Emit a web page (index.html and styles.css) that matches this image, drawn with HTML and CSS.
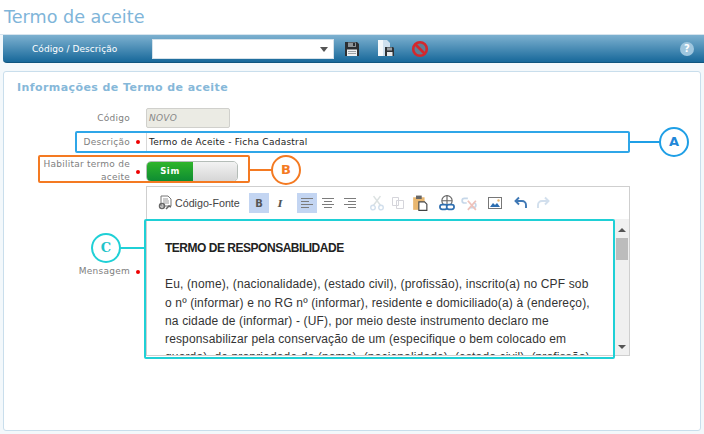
FILE: index.html
```html
<!DOCTYPE html>
<html lang="pt">
<head>
<meta charset="utf-8">
<title>Termo de aceite</title>
<link rel="stylesheet" href="styles.css">
</head>
<body>
<div class="page">
  <h1 class="title">Termo de aceite</h1>
  <div class="bar">
    <span class="bar-label">Código / Descrição</span>
    <div class="select"><span class="caret"></span></div>
    <div class="bar-icons">
      <svg class="ico" viewBox="0 0 16 16"><path d="M1 1h12l2 2v12H1z" fill="#2b2f33"/><rect x="4" y="1.500" width="8" height="4.500" fill="#8d9499"/><rect x="9" y="2" width="2" height="3" fill="#2b2f33"/><rect x="3" y="8.500" width="10" height="6.500" fill="#eef0f1"/><path d="M4 10.500h8M4 12.500h8" stroke="#9aa0a4"/></svg>
      <svg class="ico ico-saveas" viewBox="0 0 18 17"><path d="M1 0h9l3 3v13H1z" fill="#cfe0ee"/><path d="M1 0h5v16H1z" fill="#f4f8fb"/><path d="M8 7h8l1 1v8H8z" fill="#2e3338"/><rect x="10" y="7.500" width="5" height="3" fill="#9aa0a4"/><rect x="10" y="12" width="5.500" height="4" fill="#e8eaeb"/></svg>
      <svg class="ico ico-stop" viewBox="0 0 18 18"><circle cx="9" cy="9" r="6.800" fill="#5f7f96" stroke="#d3282d" stroke-width="2.600"/><path d="M4.500 4.500l9 9" stroke="#d3282d" stroke-width="2.600"/></svg>
    </div>
    <span class="help">?</span>
  </div>
  <section class="panel">
    <h2 class="panel-title">Informações de Termo de aceite</h2>
    <div class="form">
      <div class="row row-code">
        <label class="label">Código</label><span class="dot dot-off"></span>
        <div class="input input-off">NOVO</div>
      </div>
      <div class="row row-desc">
        <label class="label">Descrição</label><span class="dot"></span>
        <div class="input input-wide">Termo de Aceite - Ficha Cadastral</div>
      </div>
      <div class="row row-toggle">
        <label class="label label-two">Habilitar termo de aceite</label><span class="dot"></span>
        <div class="toggle"><span class="toggle-on">Sim</span><span class="toggle-off"></span></div>
      </div>
      <div class="row row-editor">
        <label class="label label-msg">Mensagem</label><span class="dot dot-msg"></span>
        <div class="editor">
          <div class="tools">
            <svg class="tool tool-src" viewBox="0 0 16 16"><path d="M3 1h7l3 3v7H3z" fill="#fff" stroke="#777"/><path d="M5 4h5M5 6h6M5 8h6" stroke="#999"/><circle cx="4" cy="11" r="2.500" fill="none" stroke="#666" stroke-width="1.500"/><path d="M8 14l3-3 2 1" fill="none" stroke="#666" stroke-width="1.500"/></svg>
            <span class="tool-text">Código-Fonte</span>
            <span class="tool tool-btn active"><b class="glyph">B</b></span>
            <span class="tool tool-btn gap-1"><i class="glyph glyph-i">I</i></span>
            <span class="tool tool-btn active gap-7"><svg viewBox="0 0 14 12" class="lines"><path d="M1 1.500h12M1 4.500h8M1 7.500h12M1 10.500h8"/></svg></span>
            <span class="tool tool-btn gap-1"><svg viewBox="0 0 14 12" class="lines"><path d="M1 1.500h12M3 4.500h8M1 7.500h12M3 10.500h8"/></svg></span>
            <span class="tool tool-btn gap-2"><svg viewBox="0 0 14 12" class="lines"><path d="M1 1.500h12M5 4.500h8M1 7.500h12M5 10.500h8"/></svg></span>
            <span class="tool tool-btn gap-7"><svg viewBox="0 0 14 14" class="faint big"><path d="M4 1l6 8M10 1L4 9" stroke="#9aa" fill="none" stroke-width="1.300"/><circle cx="3.500" cy="11" r="2" fill="none" stroke="#7fa6cc" stroke-width="1.200"/><circle cx="10.500" cy="11" r="2" fill="none" stroke="#7fa6cc" stroke-width="1.200"/></svg></span>
            <span class="tool tool-btn gap-1"><svg viewBox="0 0 14 14" class="faint"><path d="M1.500 1.500h6v8h-6zM5.500 4.500h7v8h-7z" fill="#fff" stroke="#889"/></svg></span>
            <span class="tool tool-btn gap-2"><svg viewBox="0 0 14 14" class="big"><path d="M1 2h10v11H1z" fill="#e9b770"/><rect x="3.500" y="0.500" width="5" height="3" fill="#666"/><path d="M6 6h5l2 2v5.500H6z" fill="#fff" stroke="#444"/></svg></span>
            <span class="tool tool-btn gap-7"><svg viewBox="0 0 14 14" class="big"><circle cx="7" cy="5" r="4.500" fill="none" stroke="#666"/><path d="M2.500 5h9M7 .5v9" stroke="#666" fill="none"/><rect x=".8" y="8.500" width="6.500" height="4" rx="2" fill="#fff" stroke="#2f6fb0" stroke-width="1.500"/><rect x="6.700" y="8.500" width="6.500" height="4" rx="2" fill="#fff" stroke="#2f6fb0" stroke-width="1.500"/></svg></span>
            <span class="tool tool-btn gap-2"><svg viewBox="0 0 14 14" class="faint big"><path d="M6 3H3a2 2 0 000 4h2M8 11h3a2 2 0 000-4" fill="none" stroke="#5d8fc2" stroke-width="1.500"/><path d="M6 5l7 8M13 5l-7 8" stroke="#d0533e" stroke-width="1.500"/></svg></span>
            <span class="tool tool-btn gap-6"><svg viewBox="0 0 14 14"><rect x=".5" y="1.500" width="13" height="11" fill="#fff" stroke="#777"/><path d="M2 11l3-4 2 2 2-2 3 4z" fill="#2f6fb0"/><circle cx="10.500" cy="4.500" r="1.200" fill="#e9b770"/></svg></span>
            <span class="tool tool-btn gap-6"><svg viewBox="0 0 14 14"><path d="M5 1.500L1.500 5 5 8.500M2 5h6a4 4 0 014 4v3" fill="none" stroke="#3f78b5" stroke-width="1.900"/></svg></span>
            <span class="tool tool-btn gap-2"><svg viewBox="0 0 14 14" class="faint"><path d="M9 1.500L12.500 5 9 8.500M12 5H6a4 4 0 00-4 4v3" fill="none" stroke="#7fa6cc" stroke-width="1.900"/></svg></span>
          </div>
          <div class="edit-area">
            <div class="doc">
              <p class="doc-head">TERMO DE RESPONSABILIDADE</p>
              <p class="doc-body">Eu, (nome), (nacionalidade), (estado civil), (profissão), inscrito(a) no CPF sob<br>o nº (informar) e no RG nº (informar), residente e domiciliado(a) à (endereço),<br>na cidade de (informar) - (UF), por meio deste instrumento declaro me<br>responsabilizar pela conservação de um (especifique o bem colocado em<br>guarda), de propriedade do (nome), (nacionalidade), (estado civil), (profissão)</p>
            </div>
            <div class="scroll">
              <span class="arrow arrow-up"></span>
              <span class="thumb"></span>
              <span class="arrow arrow-down"></span>
            </div>
          </div>
        </div>
      </div>
    </div>
  </section>

  <div class="mark mark-a"></div>
  <div class="link link-a"></div>
  <div class="badge badge-a">A</div>
  <div class="mark mark-b"></div>
  <div class="link link-b"></div>
  <div class="badge badge-b">B</div>
  <div class="mark mark-c"></div>
  <div class="link link-c"></div>
  <div class="badge badge-c">C</div>
</div>
</body>
</html>
```
FILE: styles.css
```css
* { box-sizing: border-box; }
html, body { margin: 0; height: 100%; background: #fff; }
body { font-family: "DejaVu Sans", Verdana, sans-serif; font-size: 9px; color: #777; overflow: hidden; }
.page { position: relative; width: 704px; height: 434px; display: flex; flex-direction: column; background: #f3f8fb; }
.title { margin: 0; height: 35px; padding: 5px 0 0 4px; background: #fff; font-size: 17.600px; line-height: 24px; font-weight: 400; color: #7fb5d9; border-bottom: 1px solid #d6e4ee; }
.bar { height: 28px; margin-left: 3px; display: flex; align-items: center; padding-left: 29px; border-radius: 0 0 0 4px; background: linear-gradient(#7db1d0, #17689a); border-bottom: 1px solid #0f557f; }
.bar-label { width: 120px; color: #fff; font-size: 9px; letter-spacing: .06px; }
.select { width: 182px; height: 20px; background: #fff; border: 1px solid #d6e2ea; position: relative; }
.caret { position: absolute; right: 5px; top: 7px; border: 4px solid transparent; border-top: 5px solid #555; border-bottom: 0; }
.bar-icons { display: flex; align-items: center; margin-left: 10px; }
.ico { width: 16px; height: 16px; display: block; }
.ico-saveas { width: 18px; height: 17px; margin-left: 17px; }
.ico-stop { width: 18px; height: 18px; margin-left: 16px; }
.help { margin-left: auto; margin-right: 10px; width: 14px; height: 14px; border-radius: 50%; background: #9fc6de; color: #fff; font-size: 10px; font-weight: 700; line-height: 14px; text-align: center; }
.panel { margin: 8px 3px 3px 3px; flex: 1; background: #fff; border: 1px solid #c9deec; border-radius: 3px; padding: 8px 0 0 0; }
.panel-title { margin: 0 0 0 13px; font-size: 11px; line-height: 16px; font-weight: 700; color: #86b8d9; letter-spacing: .42px; }
.form { margin-top: 12px; display: flex; flex-direction: column; }
.row { display: grid; grid-template-columns: 126px 16px auto; align-items: center; }
.row-code { height: 20px; }
.row-desc { height: 20px; margin-top: 4px; }
.row-toggle { height: 21px; margin-top: 7px; }
.row-editor { margin-top: 6px; height: 170px; }
.label { text-align: right; font-size: 9px; letter-spacing: .25px; color: #808080; }
.label-two { line-height: 13px; padding-left: 38px; margin-top: -1px; }
.dot { width: 4px; height: 4px; margin-left: 6px; background: #e00; border-radius: 50%; }
.dot-off { visibility: hidden; }
.input { height: 20px; font-size: 9px; line-height: 18px; padding-left: 2px; letter-spacing: .25px; color: #222; background: #fff; border: 1px solid #d8d8d8; }
.input-off { width: 84px; background: #ebebe4; color: #888; font-style: italic; border-radius: 2px; border-color: #d0d0cc; }
.input-wide { width: 484px; }
.toggle { width: 92px; height: 21px; display: flex; border: 1px solid #b5bdb8; border-radius: 5px; overflow: hidden; }
.toggle-on { width: 46px; background: linear-gradient(#2fb52a, #0e8c33); color: #fff; font-size: 8.500px; font-weight: 700; line-height: 19px; text-align: center; letter-spacing: .6px; }
.toggle-off { flex: 1; background: linear-gradient(#f2f2f2, #d6d6d6); }
.label-msg { align-self: start; margin-top: 80px; }
.dot-msg { align-self: start; margin-top: 84px; }
.editor { width: 484px; height: 170px; border: 1px solid #cfcfcf; display: flex; flex-direction: column; }
.tools { height: 32px; display: flex; align-items: center; padding-left: 11px; flex: none; }
.tool { display: flex; align-items: center; justify-content: center; }
.tool svg { width: 14px; height: 14px; display: block; }
.tool svg.big { width: 16px; height: 16px; }
svg.tool-src { width: 16px; height: 16px; }
.tool-text { width: 74px; font-family: "Liberation Sans", Arial, sans-serif; font-size: 10.700px; color: #444; margin: 0 0 0 1px; }
.tool-btn { width: 20px; height: 20px; }
.active { background: #c3d5f2; }
.glyph { font-family: "DejaVu Sans", sans-serif; font-size: 10px; color: #555; }
.glyph-i { font-family: "DejaVu Serif", serif; font-weight: 700; }
.gap-1 { margin-left: 1px; }
.gap-2 { margin-left: 2px; }
.gap-6 { margin-left: 6px; }
.gap-7 { margin-left: 7px; }
.lines { fill: none; stroke: #7c7c7c; stroke-width: 1.200; }
.faint { opacity: .35; }
.edit-area { flex: 1; display: flex; min-height: 0; }
.doc { flex: 1; overflow: hidden; padding: 20px 0 0 18px; font-family: "Liberation Sans", Arial, sans-serif; font-size: 12px; line-height: 18.300px; letter-spacing: .15px; color: #333; }
.doc p { margin: 0; white-space: nowrap; }
.doc .doc-head { font-weight: 700; margin-bottom: 18px; color: #222; letter-spacing: -.48px; }
.scroll { width: 15px; background: #f0f0f0; display: flex; flex-direction: column; align-items: center; }
.arrow { flex: none; border: 4px solid transparent; }
.arrow-up { border-bottom: 4px solid #555; border-top: 0; margin-top: 9px; }
.arrow-down { border-top: 4px solid #555; border-bottom: 0; margin: auto 0 6px; }
.thumb { width: 12px; height: 22px; margin-top: 6px; background: #bcbcbc; }

.mark { position: absolute; border-radius: 2px; border: 2px solid; }
.link { position: absolute; height: 2px; }
.badge { position: absolute; width: 30px; height: 30px; border-radius: 50%; background: #fff; border: 2px solid; font-family: "DejaVu Sans", sans-serif; font-size: 13px; font-weight: 700; line-height: 26px; text-align: center; }
.mark-a { left: 75px; top: 131px; width: 555px; height: 22px; border-color: #2fa6e8; }
.link-a { left: 630px; top: 141px; width: 30px; background: #1f9fe6; }
.badge-a { left: 659px; top: 127px; border-color: #1f9fe6; color: #1f87d8; }
.mark-b { left: 38px; top: 155px; width: 212px; height: 28px; border-color: #f47a22; }
.link-b { left: 250px; top: 169px; width: 22px; background: #f47a22; }
.badge-b { left: 271px; top: 155px; border-color: #f47a22; color: #f47a22; }
.mark-c { left: 144px; top: 219px; width: 471px; height: 140px; border-color: #1fd0d6; }
.link-c { left: 120px; top: 247px; width: 25px; background: #1fd0d6; }
.badge-c { left: 91px; top: 233px; border-color: #1fd0d6; color: #1fc4ca; font-family: "DejaVu Serif", serif; }
```
